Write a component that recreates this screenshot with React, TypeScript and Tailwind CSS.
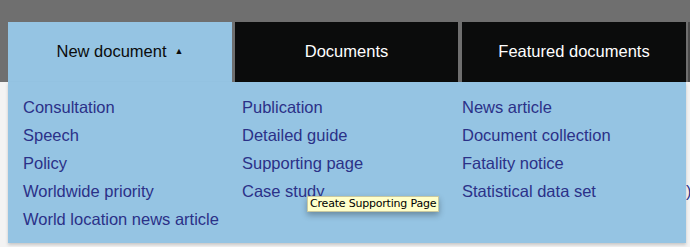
import React from "react";

const columns: string[][] = [
  ["Consultation", "Speech", "Policy", "Worldwide priority", "World location news article"],
  ["Publication", "Detailed guide", "Supporting page", "Case study"],
  ["News article", "Document collection", "Fatality notice", "Statistical data set"],
];

export default function App() {
  return (
    <div
      className="relative h-[247px] w-[690px] overflow-hidden bg-[#f3f3f3]"
      style={{ fontFamily: '"Liberation Sans", Arial, sans-serif' }}
    >
      <div className="flex h-[82px] items-end bg-[#6f6f6f] pl-[8px]">
        <div className="flex h-[60px] w-[224px] items-center justify-center bg-[#95c4e3] pb-[2px] text-[16.5px] text-[#0b0c0c]">
          New document
          <span className="ml-[8px] text-[9px] leading-none">▲</span>
        </div>
        <div className="ml-[3px] flex h-[60px] w-[223px] items-center justify-center bg-[#0b0c0c] pb-[2px] text-[16.5px] text-white">
          Documents
        </div>
        <div className="ml-[4px] flex h-[60px] w-[224px] items-center justify-center bg-[#0b0c0c] pb-[2px] text-[16.5px] text-white">
          Featured documents
        </div>
        <div className="ml-[2px] h-[60px] w-[2px] bg-[#4a4a4a]" />
      </div>
      <div className="flex">
        <div className="ml-[8px] h-[161px] w-[678px] bg-[#95c4e3] pl-[15px] pt-[11px] shadow-[0_2px_3px_rgba(0,0,0,0.18)]">
          <div className="grid grid-cols-[219px_220px_219px]">
            {columns.map((col, i) => (
              <ul key={i} className="flex flex-col">
                {col.map((item) => (
                  <li key={item} className="text-[16.5px] leading-[28px] text-[#2b3188]">
                    {item}
                  </li>
                ))}
              </ul>
            ))}
          </div>
        </div>
        <div className="w-[4px] overflow-hidden pt-[95px] text-[16.5px] leading-[28px] text-[#2b3188]">
          )
        </div>
      </div>
      <div
        className="absolute left-[307px] top-[196px] flex h-[16px] items-center border border-[#c8c8a0] bg-[#ffffc9] px-[2px] text-[11px] tracking-[-0.2px] text-black shadow-[0_3px_6px_rgba(0,0,0,0.3)]"
        style={{ fontFamily: '"DejaVu Sans", Verdana, sans-serif' }}
      >
        Create Supporting Page
      </div>
    </div>
  );
}
